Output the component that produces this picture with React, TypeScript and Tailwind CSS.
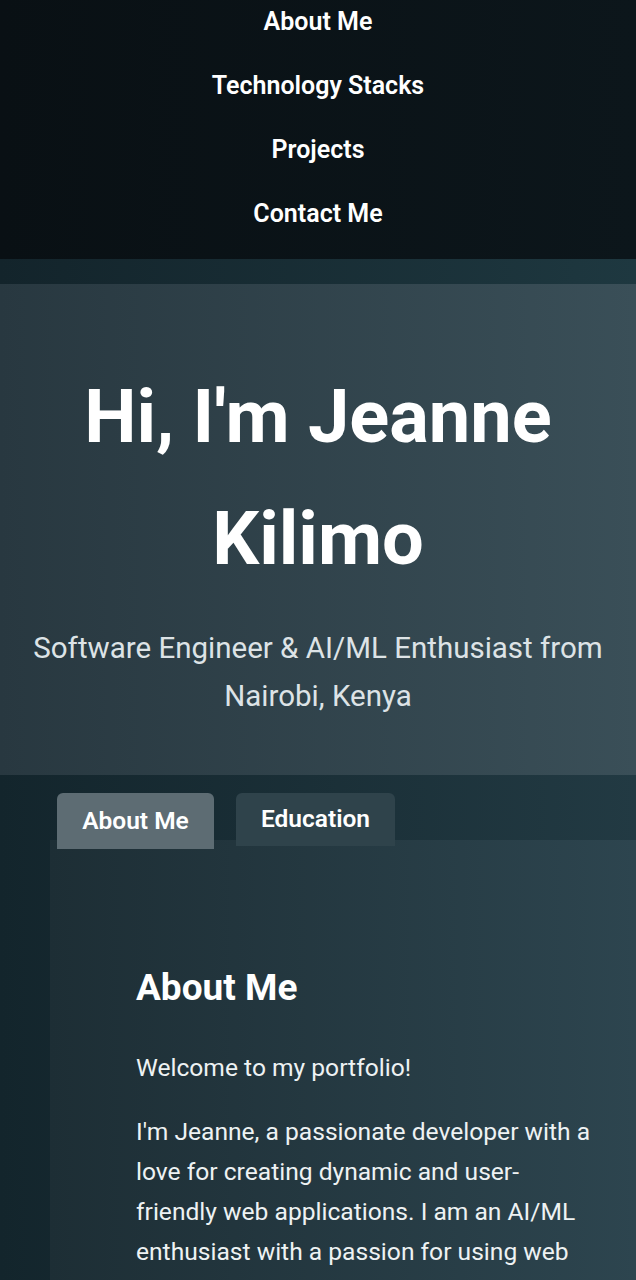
export default function App() {
  const links = ["About Me", "Technology Stacks", "Projects", "Contact Me"];
  return (
    <div className="min-h-[1280px] bg-[#0f1f25] font-['Roboto',sans-serif] text-white">
      <nav className="overflow-hidden bg-gradient-to-r from-[#091014] to-[#0c161b] pb-[14px]">
        <ul className="-mt-[11px] flex flex-col items-center">
          {links.map((l) => (
            <li key={l} className="flex h-[64px] items-center text-[25px] font-semibold leading-none">
              {l}
            </li>
          ))}
        </ul>
      </nav>
      <div className="h-[25px] bg-gradient-to-r from-[#13242b] to-[#1e3840]" />
      <header className="bg-gradient-to-r from-[#283840] to-[#3a4f58] px-4 pb-[55px] pt-[72px] text-center">
        <h1 className="text-[74px] font-bold leading-[122px]">Hi, I'm Jeanne Kilimo</h1>
        <p className="mt-[24px] text-[29.5px] leading-[48px] text-[#dde3e6]">
          Software Engineer &amp; AI/ML Enthusiast from Nairobi, Kenya
        </p>
      </header>
      <section className="bg-gradient-to-r from-[#13252c] to-[#223a43] pt-[18px]">
        <div className="flex items-start gap-[22px] pl-[57px]">
          <button className="relative z-10 h-[56px] w-[157px] rounded-t-[6px] bg-[#5d6c73] text-[24.5px] font-semibold">About Me</button>
          <button className="relative z-10 h-[53px] w-[159px] rounded-t-[6px] bg-[#2f434b] text-[24.5px] font-semibold">Education</button>
        </div>
        <div className="-mt-[9px] ml-[50px] bg-gradient-to-r from-[#1d2e35] to-[#2d454f] pb-10 pl-[86px] pr-[38px] pt-[129px]">
          <h2 className="text-[37px] font-bold leading-none">About Me</h2>
          <p className="mt-[42px] text-[24.6px] leading-[40px] text-[#eef2f3]">Welcome to my portfolio!</p>
          <p className="mt-[24px] text-[24.6px] leading-[40px] text-[#eef2f3]">
            I'm Jeanne, a passionate developer with a love for creating dynamic and user-friendly web applications. I am an AI/ML enthusiast with a passion for using web
          </p>
        </div>
      </section>
    </div>
  );
}
